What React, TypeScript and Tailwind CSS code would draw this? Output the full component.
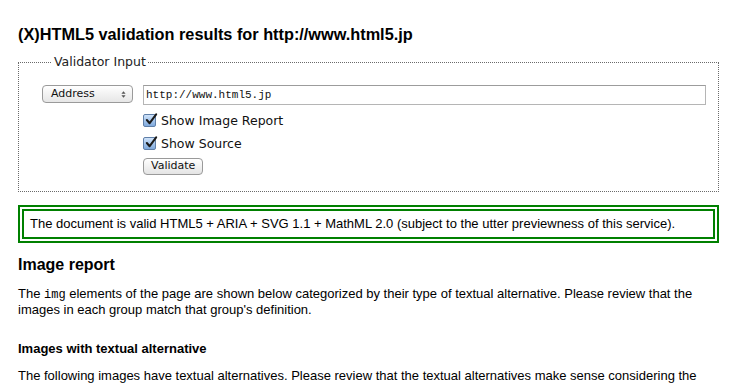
const CheckBox = () => (
  <span className="relative inline-block w-[13px] h-[13px] rounded-[2px] border border-[#5f7fa8] bg-gradient-to-b from-[#cfe3fa] to-[#7fa9dc]">
    <svg viewBox="0 0 14 14" className="absolute -top-[2px] left-[1px] w-[13px] h-[13px]">
      <path d="M2 7.5 L5 11 L12 1.5" fill="none" stroke="#1a1a1a" strokeWidth="2.2" strokeLinecap="round" strokeLinejoin="round" />
    </svg>
  </span>
);

const App = () => {
  return (
    <div className="w-[738px] h-[385px] overflow-hidden bg-white text-black font-['Liberation_Sans',Arial,sans-serif] text-[13px] px-[18px] pt-[24px]">
      <h1 className="text-[16.3px] font-bold leading-[20px]">(X)HTML5 validation results for http://www.html5.jp</h1>

      <fieldset className="mt-[10px] w-[701px] border border-dotted border-[#6a6a6a] pl-[23px] pr-[12px] pb-[16px] pt-[15px]">
        <legend className="ml-[10px] px-[2px] font-['DejaVu_Sans',sans-serif] text-[12.5px] text-[#222] leading-[16px]">Validator Input</legend>
        <div className="flex items-start gap-[10px]">
          <div className="w-[91px] h-[18px] rounded-[4px] border border-[#9a9a9a] bg-gradient-to-b from-white to-[#e6e6e6] flex items-center justify-between pl-[8px] pr-[6px] font-['DejaVu_Sans',sans-serif] text-[11px] text-[#111]">
            <span>Address</span>
            <svg viewBox="0 0 6 10" className="w-[5px] h-[9px]">
              <path d="M0.5 4 L3 1 L5.5 4 Z M0.5 6 L3 9 L5.5 6 Z" fill="#555" />
            </svg>
          </div>
          <div className="flex-1 h-[20px] border border-[#b5b5b5] border-t-[#9c9c9c] flex items-center pl-[2px] font-['Liberation_Mono',monospace] text-[11px] text-[#111]">
            http://www.html5.jp
          </div>
        </div>
        <div className="ml-[101px] flex flex-col font-['DejaVu_Sans',sans-serif] text-[12.5px] text-[#111]">
          <label className="mt-[9px] h-[13px] flex items-center gap-[5px] leading-[13px]">
            <CheckBox />
            Show Image Report
          </label>
          <label className="mt-[10px] h-[13px] flex items-center gap-[5px] leading-[13px]">
            <CheckBox />
            Show Source
          </label>
          <div className="mt-[8px] flex">
            <span className="inline-flex items-center h-[17px] px-[7px] rounded-[4px] border border-[#9a9a9a] bg-gradient-to-b from-white to-[#e4e4e4] text-[11px] text-[#111]">Validate</span>
          </div>
        </div>
      </fieldset>

      <div className="mt-[13px] w-[701px] border-[6px] border-double border-[#008000] pl-[6px] pt-[5px] pb-[5px] leading-[16px]">
        The document is valid HTML5 + ARIA + SVG 1.1 + MathML 2.0 (subject to the utter previewness of this service).
      </div>

      <h2 className="mt-[12px] text-[16px] font-bold leading-[20px]">Image report</h2>
      <p className="mt-[11px] leading-[16px] pr-[20px]">
        The <code className="font-['Liberation_Mono',monospace] text-[12px] leading-[12px]">img</code> elements of the page are shown below categorized by their type of textual alternative. Please review that the images in each group match that group's definition.
      </p>
      <h3 className="mt-[23px] text-[13px] font-bold leading-[16px]">Images with textual alternative</h3>
      <p className="mt-[11px] leading-[16px] pr-[20px]">
        The following images have textual alternatives. Please review that the textual alternatives make sense considering the context in which the images are used.
      </p>
    </div>
  );
};

export default App;
